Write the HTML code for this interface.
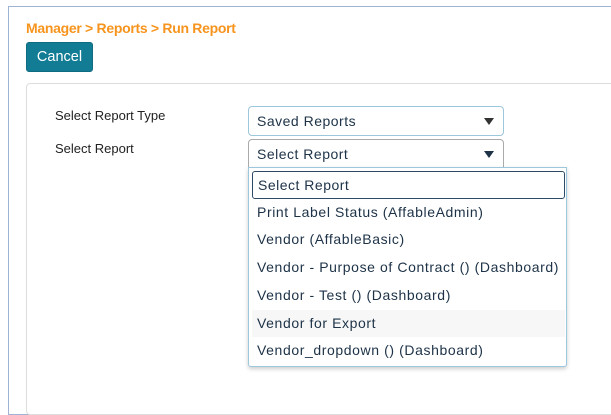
<!DOCTYPE html>
<html><head><style>
body{margin:0;width:611px;height:400px;background:#fff;font-family:"Liberation Sans",sans-serif;position:relative;overflow:hidden;color:#212b36}
.outer{position:absolute;left:8px;top:6px;right:-5px;bottom:-15px;border:1px solid #9fb3d4}
.bc{position:absolute;left:26px;top:20px;font-size:14px;font-weight:bold;color:#f7941d;letter-spacing:-0.3px}
.btn{position:absolute;left:26px;top:42px;width:67px;height:30px;background:#137c95;border:1px solid #0e6b80;border-radius:3px;color:#fff;font-size:14.5px;line-height:29px;text-align:center;box-sizing:border-box}
.panel{position:absolute;left:26px;top:83px;right:-5px;bottom:-15px;border:1px solid #ddd;border-radius:4px}
.lbl{position:absolute;left:55px;font-size:13px;color:#222}
.sel{position:absolute;left:248px;width:256px;height:30px;box-sizing:border-box;border:1px solid #9cc7dc;border-radius:4px;font-size:14px;line-height:28px;padding-left:8px;color:#1d3247;letter-spacing:0.5px}
.arr{position:absolute;right:9px;top:11px;width:0;height:0;border-left:5px solid transparent;border-right:5px solid transparent;border-top:7px solid #333}
.dd{position:absolute;left:248px;top:167px;width:319px;height:200px;box-sizing:border-box;border:1px solid #9cc7dc;border-radius:0 0 3px 3px;background:#fff;box-shadow:0 2px 4px rgba(0,0,0,.2)}
.srch{position:absolute;left:3px;top:3px;width:313px;height:28px;box-sizing:border-box;border:1px solid #2c4a66;border-radius:3px;font-size:14px;line-height:26px;padding-left:5px;color:#1d3247;letter-spacing:0.5px}
.it{position:absolute;left:8px;font-size:14px;color:#1d3247;letter-spacing:0.6px}
.hl{position:absolute;left:3px;top:142px;width:313px;height:27px;background:#f7f7f7}
</style></head><body>
<div class="outer"></div>
<div class="bc">Manager &gt; Reports &gt; Run Report</div>
<div class="btn">Cancel</div>
<div class="panel"></div>
<div class="lbl" style="top:108px">Select Report Type</div>
<div class="lbl" style="top:141px">Select Report</div>
<div class="sel" style="top:106px">Saved Reports<div class="arr"></div></div>
<div class="sel" style="top:139px;border-color:#aaa;border-radius:4px 4px 0 0">Select Report<div class="arr" style="border-top-color:#1d3247"></div></div>
<div class="dd">
<div class="srch">Select Report</div>
<div class="hl"></div>
<div class="it" style="top:36px">Print Label Status (AffableAdmin)</div>
<div class="it" style="top:63px">Vendor (AffableBasic)</div>
<div class="it" style="top:91px">Vendor - Purpose of Contract () (Dashboard)</div>
<div class="it" style="top:119px">Vendor - Test () (Dashboard)</div>
<div class="it" style="top:147px">Vendor for Export</div>
<div class="it" style="top:174px">Vendor_dropdown () (Dashboard)</div>
</div>
</body></html>
